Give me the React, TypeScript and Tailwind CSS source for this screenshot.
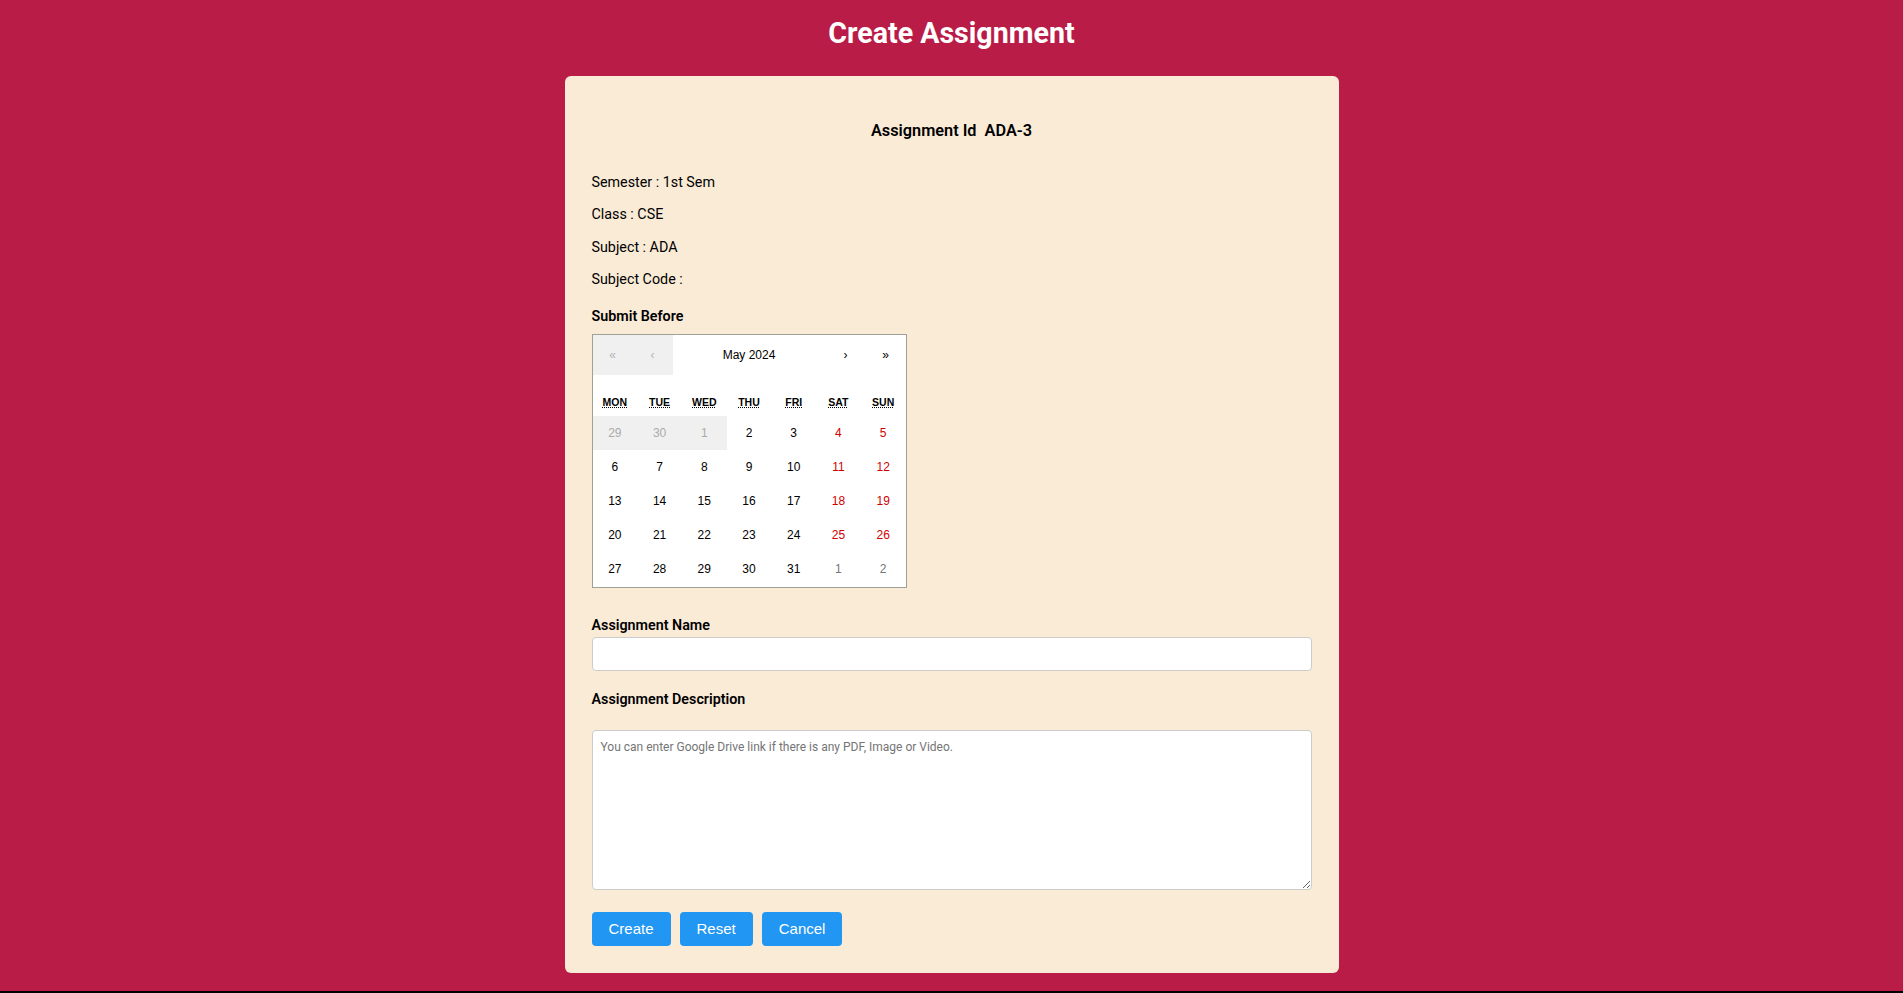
import React from 'react';

type Day = { n: number; kind: 'disabled' | 'normal' | 'weekend' | 'neighbor' };

const weekdays = [
  { short: 'MON', full: 'Monday' },
  { short: 'TUE', full: 'Tuesday' },
  { short: 'WED', full: 'Wednesday' },
  { short: 'THU', full: 'Thursday' },
  { short: 'FRI', full: 'Friday' },
  { short: 'SAT', full: 'Saturday' },
  { short: 'SUN', full: 'Sunday' },
];

function buildDays(): Day[] {
  const days: Day[] = [
    { n: 29, kind: 'disabled' },
    { n: 30, kind: 'disabled' },
    { n: 1, kind: 'disabled' },
  ];
  for (let d = 2; d <= 31; d++) {
    const col = days.length % 7;
    days.push({ n: d, kind: col >= 5 ? 'weekend' : 'normal' });
  }
  days.push({ n: 1, kind: 'neighbor' }, { n: 2, kind: 'neighbor' });
  return days;
}

function Calendar() {
  const days = buildDays();
  return (
    <div className="mt-[8px] w-[315px] border border-[#a0a096] bg-white font-['Liberation_Sans',Arial,sans-serif] text-black">
      <div className="mb-[16px] flex h-[40px]">
        <button disabled className="w-[40px] bg-[#f0f0f0] text-[12px] text-[#b4b4b4]">«</button>
        <button disabled className="w-[40px] bg-[#f0f0f0] text-[12px] text-[#b4b4b4]">‹</button>
        <button className="flex-1 text-[12px]">May 2024</button>
        <button className="w-[40px] text-[12px]">›</button>
        <button className="w-[40px] text-[12px]">»</button>
      </div>
      <div className="grid h-[25px] grid-cols-7 pt-[4px] text-center text-[10.5px] font-bold leading-[14px]">
        {weekdays.map((w) => (
          <div key={w.short}>
            <abbr title={w.full}>{w.short}</abbr>
          </div>
        ))}
      </div>
      <div className="grid grid-cols-7 pb-[1px]">
        {days.map((d, i) => (
          <button
            key={i}
            disabled={d.kind === 'disabled'}
            className={
              'h-[34px] text-center text-[12px] leading-[16px] ' +
              (d.kind === 'disabled'
                ? 'bg-[#f0f0f0] text-[#ababab]'
                : d.kind === 'weekend'
                ? 'text-[#d10000]'
                : d.kind === 'neighbor'
                ? 'text-[#757575]'
                : 'text-black')
            }
          >
            {d.n}
          </button>
        ))}
      </div>
    </div>
  );
}

export default function App() {
  const info = ['Semester : 1st Sem', 'Class : CSE', 'Subject : ADA', 'Subject Code :'];

  return (
    <div className="min-h-screen bg-black font-['Roboto',sans-serif]">
      <div className="h-[991px] bg-[#b91d47] pt-[16px]">
        <h1 className="text-center text-[28.6px] font-bold leading-[34px] text-white">Create Assignment</h1>

        <div className="mx-auto mt-[26px] w-[774px] rounded-[6px] bg-[#faebd7] px-[27px] pt-[45px] pb-[27px] text-black">
          <h3 className="whitespace-pre text-center text-[16.3px] font-semibold leading-[20px]">Assignment Id  ADA-3</h3>

          <div className="mt-[31px] flex flex-col gap-[12.3px] text-[14.3px] leading-[20px]">
            {info.map((line) => (
              <p key={line}>{line}</p>
            ))}
          </div>

          <p className="mt-[17px] text-[14.3px] font-semibold leading-[20px]">Submit Before</p>
          <Calendar />

          <label className="mt-[27px] block text-[14.3px] font-semibold leading-[20px]">Assignment Name</label>
          <input
            type="text"
            className="mt-[2px] block h-[34px] w-full rounded-[4px] border border-[#cccccc] bg-white px-[8px] text-[14px] outline-none"
          />

          <label className="mt-[18px] block text-[14.3px] font-semibold leading-[20px]">Assignment Description</label>
          <textarea
            placeholder="You can enter Google Drive link if there is any PDF, Image or Video."
            className="mt-[21px] block h-[160px] w-full rounded-[4px] border border-[#cccccc] bg-white px-[8px] pt-[9px] pb-[8px] text-[12px] leading-[14px] outline-none placeholder:text-[#757575]"
          />

          <div className="mt-[22px] flex gap-[9px] font-['Liberation_Sans',Arial,sans-serif]">
            {['Create', 'Reset', 'Cancel'].map((b) => (
              <button key={b} className="h-[34px] rounded-[4px] bg-[#2196f3] px-[17px] text-[15px] text-white">
                {b}
              </button>
            ))}
          </div>
        </div>
      </div>
    </div>
  );
}
